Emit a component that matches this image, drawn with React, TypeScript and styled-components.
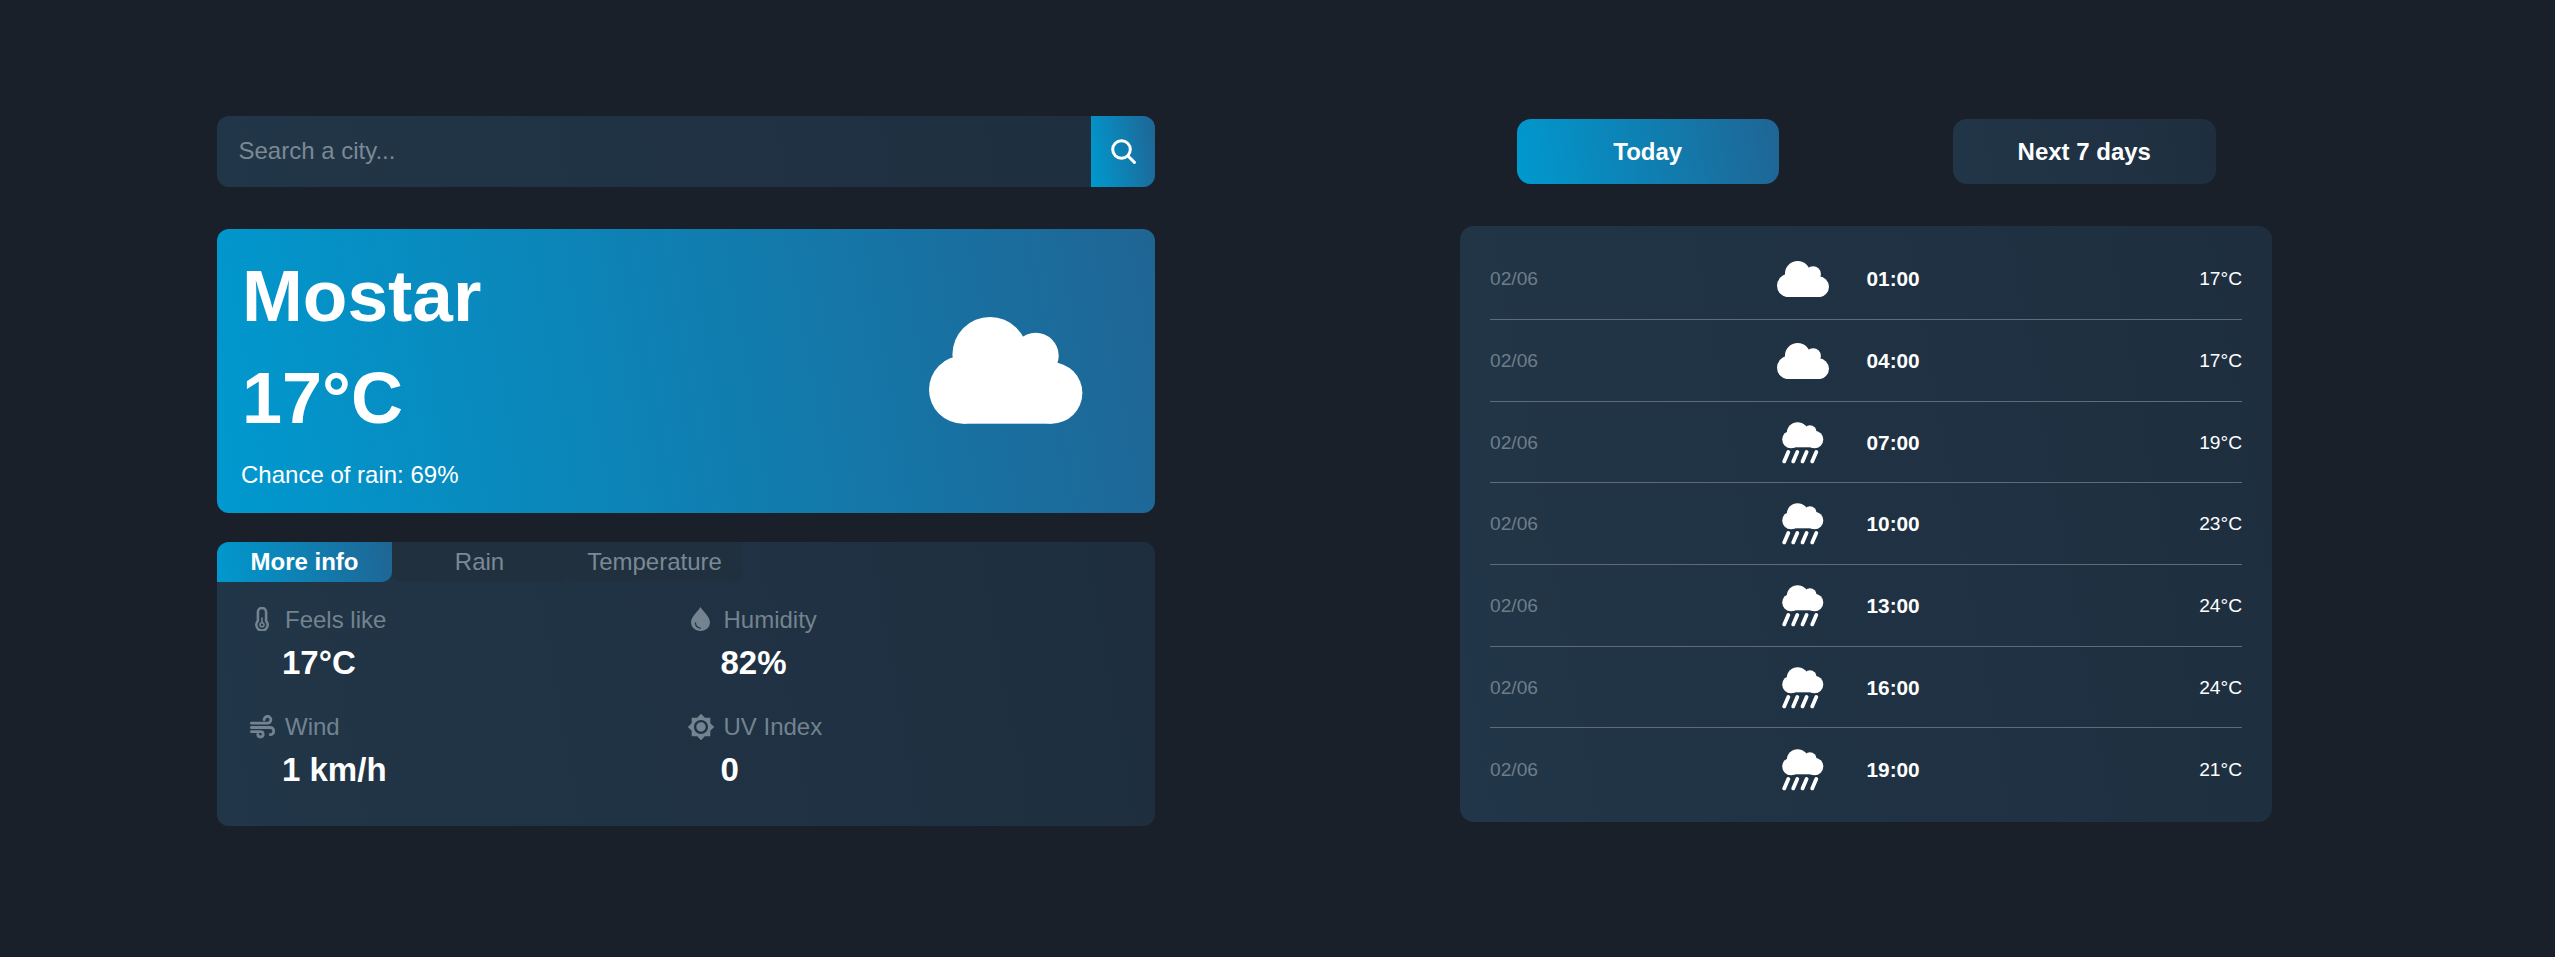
import React from "react";
import styled, { createGlobalStyle } from "styled-components";
import { MdBrightness7 } from "react-icons/md";

const GlobalStyle = createGlobalStyle`
  html, body { margin: 0; padding: 0; background: #19202a; }
  * { box-sizing: border-box; }
  body { font-family: "Liberation Sans", Arial, sans-serif; color: #fff; }
`;

const accent = "linear-gradient(80deg, #0099cf 0%, #1f6594 100%)";
const panel = "linear-gradient(80deg, #213648 0%, #1e2e3f 100%)";

const Page = styled.main`
  display: flex;
  align-items: flex-start;
  gap: 305px;
  min-height: 957px;
  padding: 116px 0 0 217px;
  background: #19202a;
`;
const LeftColumn = styled.section`
  width: 938px;
  display: flex;
  flex-direction: column;
`;
const RightColumn = styled.section`
  width: 812px;
  margin-top: 3px;
  display: flex;
  flex-direction: column;
  gap: 42px;
`;
const SearchBar = styled.form`
  display: flex;
  height: 71px;
  border-radius: 12px;
  overflow: hidden;
  background: ${panel};
  margin-bottom: 42px;
`;
const SearchInput = styled.input`
  flex: 1;
  min-width: 0;
  border: 0;
  outline: 0;
  background: transparent;
  padding: 0 22px 2px 21.5px;
  font: 24px "Liberation Sans", Arial, sans-serif;
  color: #fff;
  &::placeholder { color: #7b8994; opacity: 1; }
`;
const SearchButton = styled.button`
  width: 64px;
  border: 0;
  padding: 0;
  background: ${accent};
  color: #fff;
  display: flex;
  align-items: center;
  justify-content: center;
`;
const Hero = styled.article`
  height: 284px;
  border-radius: 12px;
  background: ${accent};
  padding: 25px 44px 24px 24px;
  margin-bottom: 29px;
  display: flex;
  justify-content: space-between;
  align-items: flex-start;
`;
const HeroText = styled.div`
  display: flex;
  flex-direction: column;
`;
const City = styled.h1`
  margin: 0 0 20px;
  padding-left: 1px;
  font-size: 73px;
  line-height: 83px;
  font-weight: 700;
`;
const HeroTemp = styled.div`
  padding-left: 1px;
  font-size: 72px;
  line-height: 83px;
  font-weight: 700;
  margin-bottom: 21px;
`;
const Chance = styled.div`
  font-size: 24px;
  line-height: 28px;
`;
const HeroIcon = styled.div`
  margin: 63px 28.5px 0 0;
  display: flex;
`;
const InfoPanel = styled.section`
  height: 284px;
  border-radius: 12px;
  overflow: hidden;
  background: ${panel};
`;
const TabBar = styled.div`
  display: flex;
  height: 40px;
`;
const Tab = styled.div<{ $active?: boolean }>`
  width: 175px;
  height: 40px;
  display: flex;
  align-items: center;
  justify-content: center;
  padding-bottom: 1px;
  font-size: 24px;
  font-weight: ${(p) => (p.$active ? 700 : 400)};
  color: ${(p) => (p.$active ? "#fff" : "#7b8994")};
  background: ${(p) => (p.$active ? accent : "#20303f")};
  border-bottom-left-radius: ${(p) => (p.$active ? "0" : "10px")};
  border-bottom-right-radius: 10px;
`;
const Stats = styled.div`
  display: grid;
  grid-template-columns: 438.5px 438.5px;
  row-gap: 31px;
  padding: 24px 0 0 24px;
`;
const Stat = styled.div`
  display: flex;
  flex-direction: column;
  gap: 10px;
`;
const StatLabel = styled.div`
  display: flex;
  align-items: center;
  height: 28px;
  font-size: 24px;
  line-height: 28px;
  color: #73838f;
`;
const StatIcon = styled.span<{ $lift?: number }>`
  width: 42px;
  margin-right: 2px;
  margin-bottom: ${(p) => p.$lift ?? 0}px;
  flex: none;
  display: flex;
  justify-content: center;
  color: #73838f;
`;
const StatValue = styled.div`
  padding-left: 41px;
  font-size: 33px;
  line-height: 38px;
  font-weight: 700;
`;
const RangeBar = styled.div`
  display: flex;
  justify-content: center;
  gap: 174px;
`;
const RangeButton = styled.button<{ $active?: boolean }>`
  width: 262.5px;
  height: 65px;
  border: 0;
  border-radius: 14px;
  background: ${(p) => (p.$active ? accent : panel)};
  color: #fff;
  font: 700 24px "Liberation Sans", Arial, sans-serif;
`;
const Forecast = styled.section`
  height: 596px;
  padding: 12.3px 30px 10px;
  border-radius: 14px;
  background: ${panel};
`;
const Row = styled.div`
  height: 81.7px;
  padding-top: 1.4px;
  display: grid;
  grid-template-columns: 281px 64px 1fr auto;
  align-items: center;
  border-bottom: 1px solid #5d6c7b;
  &:last-child { border-bottom: 0; }
`;
const RowDate = styled.span`
  font-size: 19.2px;
  color: #6e7d8a;
`;
const RowIcon = styled.span`
  display: flex;
  justify-content: center;
`;
const RowTime = styled.span`
  padding-left: 31.5px;
  font-size: 20.8px;
  font-weight: 700;
`;
const RowTemp = styled.span`
  font-size: 19.2px;
`;

function Cloud({ width }: { width: number }) {
  return (
    <svg width={width} height={(width * 107) / 153.4} viewBox="0 0 153.4 107" fill="#fff">
      <circle cx="34" cy="72.7" r="34" />
      <circle cx="122.7" cy="76" r="30.7" />
      <circle cx="61" cy="37.6" r="37.6" />
      <circle cx="106.7" cy="38.7" r="23" />
      <rect x="34" y="40" width="88.7" height="66.7" />
    </svg>
  );
}

function RainCloud() {
  return (
    <svg width="42" height="42" viewBox="0 0 42 42" fill="#fff">
      <circle cx="9" cy="17.5" r="8.8" />
      <circle cx="32.6" cy="17.5" r="8.7" />
      <circle cx="15.6" cy="11" r="10.8" />
      <circle cx="28" cy="9.8" r="6.6" />
      <rect x="9" y="8" width="23.6" height="17.3" />
      <g stroke="#fff" strokeWidth="3.8" strokeLinecap="round">
        <path d="M6.3 30 2.2 39.4" />
        <path d="M15.3 30 11.2 39.4" />
        <path d="M24.6 30 20.5 39.4" />
        <path d="M34.3 30 30.2 39.4" />
      </g>
    </svg>
  );
}

function Thermometer() {
  return (
    <svg width="14" height="24" viewBox="0 0 14 24" fill="none" stroke="currentColor">
      <path strokeWidth="2.6" d="M2.9 13.8V5a4.1 4.1 0 0 1 8.2 0v8.8a5.7 5.7 0 1 1-8.2 0Z" />
      <circle cx="7" cy="17.8" r="2" strokeWidth="1.6" />
      <path strokeWidth="1.6" d="M7 15.8V10.5" />
    </svg>
  );
}

function Droplet() {
  return (
    <svg width="19" height="24" viewBox="0 0 19 24">
      <path
        fill="currentColor"
        d="M9.5 0C7.5 4 0 9.5 0 15.3 0 20.3 4.2 24 9.5 24S19 20.3 19 15.3C19 9.5 11.5 4 9.5 0Z"
      />
      <path fill="none" stroke="#21364a" strokeWidth="1.3" strokeLinecap="round" d="M4.4 15.8c.2 3 2.2 5 4.9 5.3" />
    </svg>
  );
}

function WindGust() {
  return (
    <svg width="25" height="24" viewBox="0 0 25 24" fill="none" stroke="currentColor" strokeWidth="2.8" strokeLinecap="round">
      <path d="M1.4 8.2H17.5a3.4 3.4 0 1 0-3.4-3.4" />
      <path d="M1.4 12.5H20.2a3.6 3.6 0 0 1 0 7.2" />
      <path d="M1.4 16.6H10.5a2.7 2.7 0 1 1-2.7 2.7" />
    </svg>
  );
}

function Magnifier() {
  return (
    <svg width="25" height="25" viewBox="0 0 25 25" fill="none" stroke="currentColor" strokeWidth="3" strokeLinecap="round">
      <circle cx="10.5" cy="10.5" r="8.8" />
      <path d="M17 17l6.4 6.4" />
    </svg>
  );
}

const rows = [
  { time: "01:00", temp: "17°C", rain: false },
  { time: "04:00", temp: "17°C", rain: false },
  { time: "07:00", temp: "19°C", rain: true },
  { time: "10:00", temp: "23°C", rain: true },
  { time: "13:00", temp: "24°C", rain: true },
  { time: "16:00", temp: "24°C", rain: true },
  { time: "19:00", temp: "21°C", rain: true },
];

export default function App() {
  return (
    <>
      <GlobalStyle />
      <Page>
        <LeftColumn>
          <SearchBar onSubmit={(e) => e.preventDefault()}>
            <SearchInput placeholder="Search a city..." />
            <SearchButton type="submit" aria-label="Search">
              <Magnifier />
            </SearchButton>
          </SearchBar>
          <Hero>
            <HeroText>
              <City>Mostar</City>
              <HeroTemp>17°C</HeroTemp>
              <Chance>Chance of rain: 69%</Chance>
            </HeroText>
            <HeroIcon>
              <Cloud width={153.4} />
            </HeroIcon>
          </Hero>
          <InfoPanel>
            <TabBar>
              <Tab $active>More info</Tab>
              <Tab>Rain</Tab>
              <Tab>Temperature</Tab>
            </TabBar>
            <Stats>
              <Stat>
                <StatLabel>
                  <StatIcon $lift={2}><Thermometer /></StatIcon>
                  Feels like
                </StatLabel>
                <StatValue>17°C</StatValue>
              </Stat>
              <Stat>
                <StatLabel>
                  <StatIcon $lift={2}><Droplet /></StatIcon>
                  Humidity
                </StatLabel>
                <StatValue>82%</StatValue>
              </Stat>
              <Stat>
                <StatLabel>
                  <StatIcon><WindGust /></StatIcon>
                  Wind
                </StatLabel>
                <StatValue>1 km/h</StatValue>
              </Stat>
              <Stat>
                <StatLabel>
                  <StatIcon><MdBrightness7 size={28} /></StatIcon>
                  UV Index
                </StatLabel>
                <StatValue>0</StatValue>
              </Stat>
            </Stats>
          </InfoPanel>
        </LeftColumn>
        <RightColumn>
          <RangeBar>
            <RangeButton $active>Today</RangeButton>
            <RangeButton>Next 7 days</RangeButton>
          </RangeBar>
          <Forecast>
            {rows.map((r) => (
              <Row key={r.time}>
                <RowDate>02/06</RowDate>
                <RowIcon>{r.rain ? <RainCloud /> : <Cloud width={52} />}</RowIcon>
                <RowTime>{r.time}</RowTime>
                <RowTemp>{r.temp}</RowTemp>
              </Row>
            ))}
          </Forecast>
        </RightColumn>
      </Page>
    </>
  );
}
